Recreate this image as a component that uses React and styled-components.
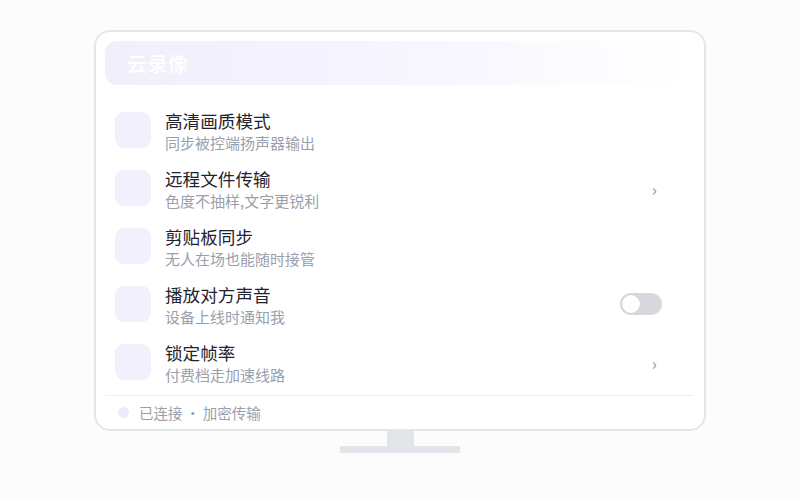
import React from 'react';
import styled, { createGlobalStyle } from 'styled-components';

const GlobalStyle = createGlobalStyle`
  html, body {
    margin: 0;
    padding: 0;
    background: #fcfcfd;
    font-family: "Noto Sans CJK SC", "Noto Sans", sans-serif;
  }
`;

const Page = styled.div`
  width: 800px;
  height: 500px;
  display: flex;
  flex-direction: column;
  align-items: center;
  padding-top: 30px;
  box-sizing: border-box;
`;

const Screen = styled.div`
  width: 612px;
  height: 401px;
  box-sizing: border-box;
  border: 2px solid #e4e6eb;
  border-radius: 16px;
  background: #ffffff;
  padding: 9px 10px 0 9px;
  display: flex;
  flex-direction: column;
`;

const Header = styled.div`
  height: 45px;
  border-radius: 12px;
  background: linear-gradient(90deg, #f2effd 0%, #f6f4fe 45%, #ffffff 100%);
  display: flex;
  align-items: center;
  padding-left: 22px;
`;

const HeaderTitle = styled.span`
  color: #ffffff;
  font-size: 20px;
  font-weight: 500;
  letter-spacing: 0.5px;
`;

const List = styled.div`
  display: flex;
  flex-direction: column;
  margin-top: 16px;
`;

const Row = styled.div`
  height: 58px;
  display: flex;
  align-items: center;
  padding: 0 32px 0 10px;
`;

const IconBox = styled.div`
  width: 36px;
  height: 36px;
  border-radius: 9px;
  background: #f3f0fd;
  flex-shrink: 0;
`;

const Texts = styled.div`
  flex: 1;
  margin-left: 14px;
  display: flex;
  flex-direction: column;
  padding-top: 3px;
`;

const Title = styled.div`
  font-size: 17.6px;
  line-height: 22px;
  color: #1f2430;
`;

const Sub = styled.div`
  font-size: 15px;
  line-height: 21px;
  color: #9aa0ab;
`;

const Chevron = styled.span`
  color: #8d93a0;
  font-size: 17px;
  margin-right: 5px;
`;

const Toggle = styled.div`
  width: 42px;
  height: 22px;
  border-radius: 11px;
  background: #d7d9df;
  display: flex;
  align-items: center;
  padding: 0 2px;
  box-sizing: border-box;
`;

const Knob = styled.div`
  width: 18px;
  height: 18px;
  border-radius: 50%;
  background: #ffffff;
  box-shadow: 0 0 0 1px #d0d3da;
`;

const Footer = styled.div`
  margin-top: 4px;
  border-top: 1px solid #eceef2;
  height: 33px;
  display: flex;
  align-items: center;
  padding-left: 13px;
`;

const Dot = styled.div`
  width: 11px;
  height: 11px;
  border-radius: 50%;
  background: #eeeafc;
  margin-right: 10px;
`;

const FooterText = styled.span`
  font-size: 14.5px;
  color: #9aa0ab;
`;

const Neck = styled.div`
  width: 27px;
  height: 15px;
  background: #e2e5ea;
`;

const Base = styled.div`
  width: 120px;
  height: 7px;
  background: #e2e5ea;
`;

const rows = [
  { title: '高清画质模式', sub: '同步被控端扬声器输出' },
  { title: '远程文件传输', sub: '色度不抽样,文字更锐利', action: 'chevron' },
  { title: '剪贴板同步', sub: '无人在场也能随时接管' },
  { title: '播放对方声音', sub: '设备上线时通知我', action: 'toggle' },
  { title: '锁定帧率', sub: '付费档走加速线路', action: 'chevron' },
];

export default function App() {
  return (
    <>
      <GlobalStyle />
      <Page>
        <Screen>
          <Header>
            <HeaderTitle>云录像</HeaderTitle>
          </Header>
          <List>
            {rows.map((r) => (
              <Row key={r.title}>
                <IconBox />
                <Texts>
                  <Title>{r.title}</Title>
                  <Sub>{r.sub}</Sub>
                </Texts>
                {r.action === 'chevron' && <Chevron>›</Chevron>}
                {r.action === 'toggle' && (
                  <Toggle>
                    <Knob />
                  </Toggle>
                )}
              </Row>
            ))}
          </List>
          <Footer>
            <Dot />
            <FooterText>已连接{'\u2009·\u2009'}加密传输</FooterText>
          </Footer>
        </Screen>
        <Neck />
        <Base />
      </Page>
    </>
  );
}
